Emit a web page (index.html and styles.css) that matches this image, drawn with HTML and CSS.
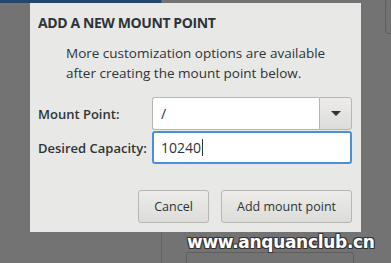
FILE: index.html
```html
<html>
    <head>
        <title>Add a New Mount Point</title>
        <meta charset="utf-8">
        <link rel="stylesheet" href="styles.css">
    </head>
    <body>
        <div class="page">
            <div class="sidebar">
                <div class="sidebar-head"></div>
            </div>
            <div class="main">
                <div class="corner-box"></div>
                <div class="field">
                    <span class="field-label">Label</span>
                    <div class="field-entry"></div>
                </div>
            </div>
        </div>

        <div class="dialog">
            <h4>Add a new mount point</h4>
            <p class="hint">More customization options are available after creating the mount point below.</p>
            <div class="form">
                <label>Mount Point:</label>
                <div class="combo">
                    <div class="combo-entry">/</div>
                    <div class="combo-button">
                        <svg width="10" height="5" viewBox="0 0 10 5"><path d="M0 0 L10 0 L5 5 Z" fill="#2e3436"/></svg>
                    </div>
                </div>
                <label>Desired Capacity:</label>
                <div class="entry focused">10240<span class="caret"></span></div>
            </div>
            <div class="buttons">
                <button class="btn cancel">Cancel</button>
                <button class="btn add">Add mount point</button>
            </div>
        </div>

        <div class="watermark">www.anquanclub.cn</div>
    </body>
</html>
```

FILE: styles.css
```css
body {
    margin: 0;
    width: 391px;
    height: 263px;
    overflow: hidden;
    background: #737373;
    font-family: 'Open Sans', sans-serif;
    color: #2e3436;
    position: relative;
}

.page {
    display: grid;
    grid-template-columns: 162px 1fr;
    height: 263px;
    overflow: hidden;
}

.sidebar {
    border-right: 1px solid #626262;
}

.sidebar-head {
    height: 3px;
    background: #24466d;
}

.main {
    position: relative;
    overflow: hidden;
}

.corner-box {
    position: absolute;
    right: -6px;
    top: -2px;
    width: 10px;
    height: 34px;
    border: 1px solid #5e5e5e;
    border-radius: 4px;
}

.field {
    padding: 232px 0 0 24px;
}

.field-label {
    display: block;
    font-size: 13px;
    line-height: 16px;
    color: #666;
}

.field-entry {
    margin-top: 4px;
    width: 166px;
    height: 30px;
    border: 1px solid #5f5f5f;
    border-radius: 3px;
}

.dialog {
    position: absolute;
    left: 30px;
    top: 3px;
    width: 331px;
    height: 229px;
    box-sizing: border-box;
    background: #e8e8e7;
    padding: 10px 9px 9px 8px;
    display: flex;
    flex-direction: column;
}

.dialog h4 {
    margin: 0;
    font-size: 14px;
    font-weight: bold;
    letter-spacing: -0.4px;
    text-transform: uppercase;
    line-height: 20px;
    color: #2e3436;
}

.hint {
    margin: 10px 0 0 28px;
    font-size: 13.5px;
    line-height: 20px;
    color: #2e3436;
}

.form {
    display: grid;
    grid-template-columns: 114px 200px;
    grid-auto-rows: 33px;
    row-gap: 1px;
    align-items: center;
    margin-top: 14px;
}

.form label {
    font-size: 13px;
    font-weight: 600;
    white-space: nowrap;
    color: #2e3436;
}

.combo {
    display: flex;
    height: 33px;
    box-sizing: border-box;
}

.combo-entry {
    flex: 1;
    background: #fff;
    border: 1px solid #b6b6b3;
    border-right: none;
    border-radius: 3px 0 0 3px;
    padding-left: 8px;
    font-size: 14px;
    line-height: 31px;
}

.combo-button {
    width: 33px;
    box-sizing: border-box;
    border: 1px solid #b6b6b3;
    border-radius: 0 3px 3px 0;
    background: linear-gradient(#edecea, #dcdcd9);
    display: flex;
    align-items: center;
    justify-content: center;
}

.entry {
    height: 33px;
    box-sizing: border-box;
    background: #fff;
    border: 1px solid #b6b6b3;
    border-radius: 3px;
    padding-left: 8px;
    font-size: 14px;
    line-height: 29px;
    display: flex;
    align-items: center;
}

.entry.focused {
    border: 2px solid #4a90d9;
    padding-left: 7px;
}

.caret {
    display: inline-block;
    width: 1px;
    height: 17px;
    background: #2e3436;
    margin-left: 1px;
}

.buttons {
    margin-top: auto;
    display: flex;
    justify-content: flex-end;
    gap: 12px;
}

.btn {
    height: 33px;
    box-sizing: border-box;
    border: 1px solid #b6b6b3;
    border-radius: 3px;
    background: linear-gradient(#edecea, #dcdcd9);
    font-family: 'Open Sans', sans-serif;
    font-size: 12.5px;
    color: #2e3436;
    padding: 0;
}

.btn.cancel {
    width: 71px;
}

.btn.add {
    width: 131px;
}

.watermark {
    position: absolute;
    left: 187px;
    top: 232px;
    font-family: 'DejaVu Sans', sans-serif;
    font-weight: bold;
    font-size: 17px;
    letter-spacing: -0.3px;
    color: #fff;
    text-shadow: 1px 1px 0 #333, -1px -1px 0 #333, 1px -1px 0 #333, -1px 1px 0 #333;
}
```
